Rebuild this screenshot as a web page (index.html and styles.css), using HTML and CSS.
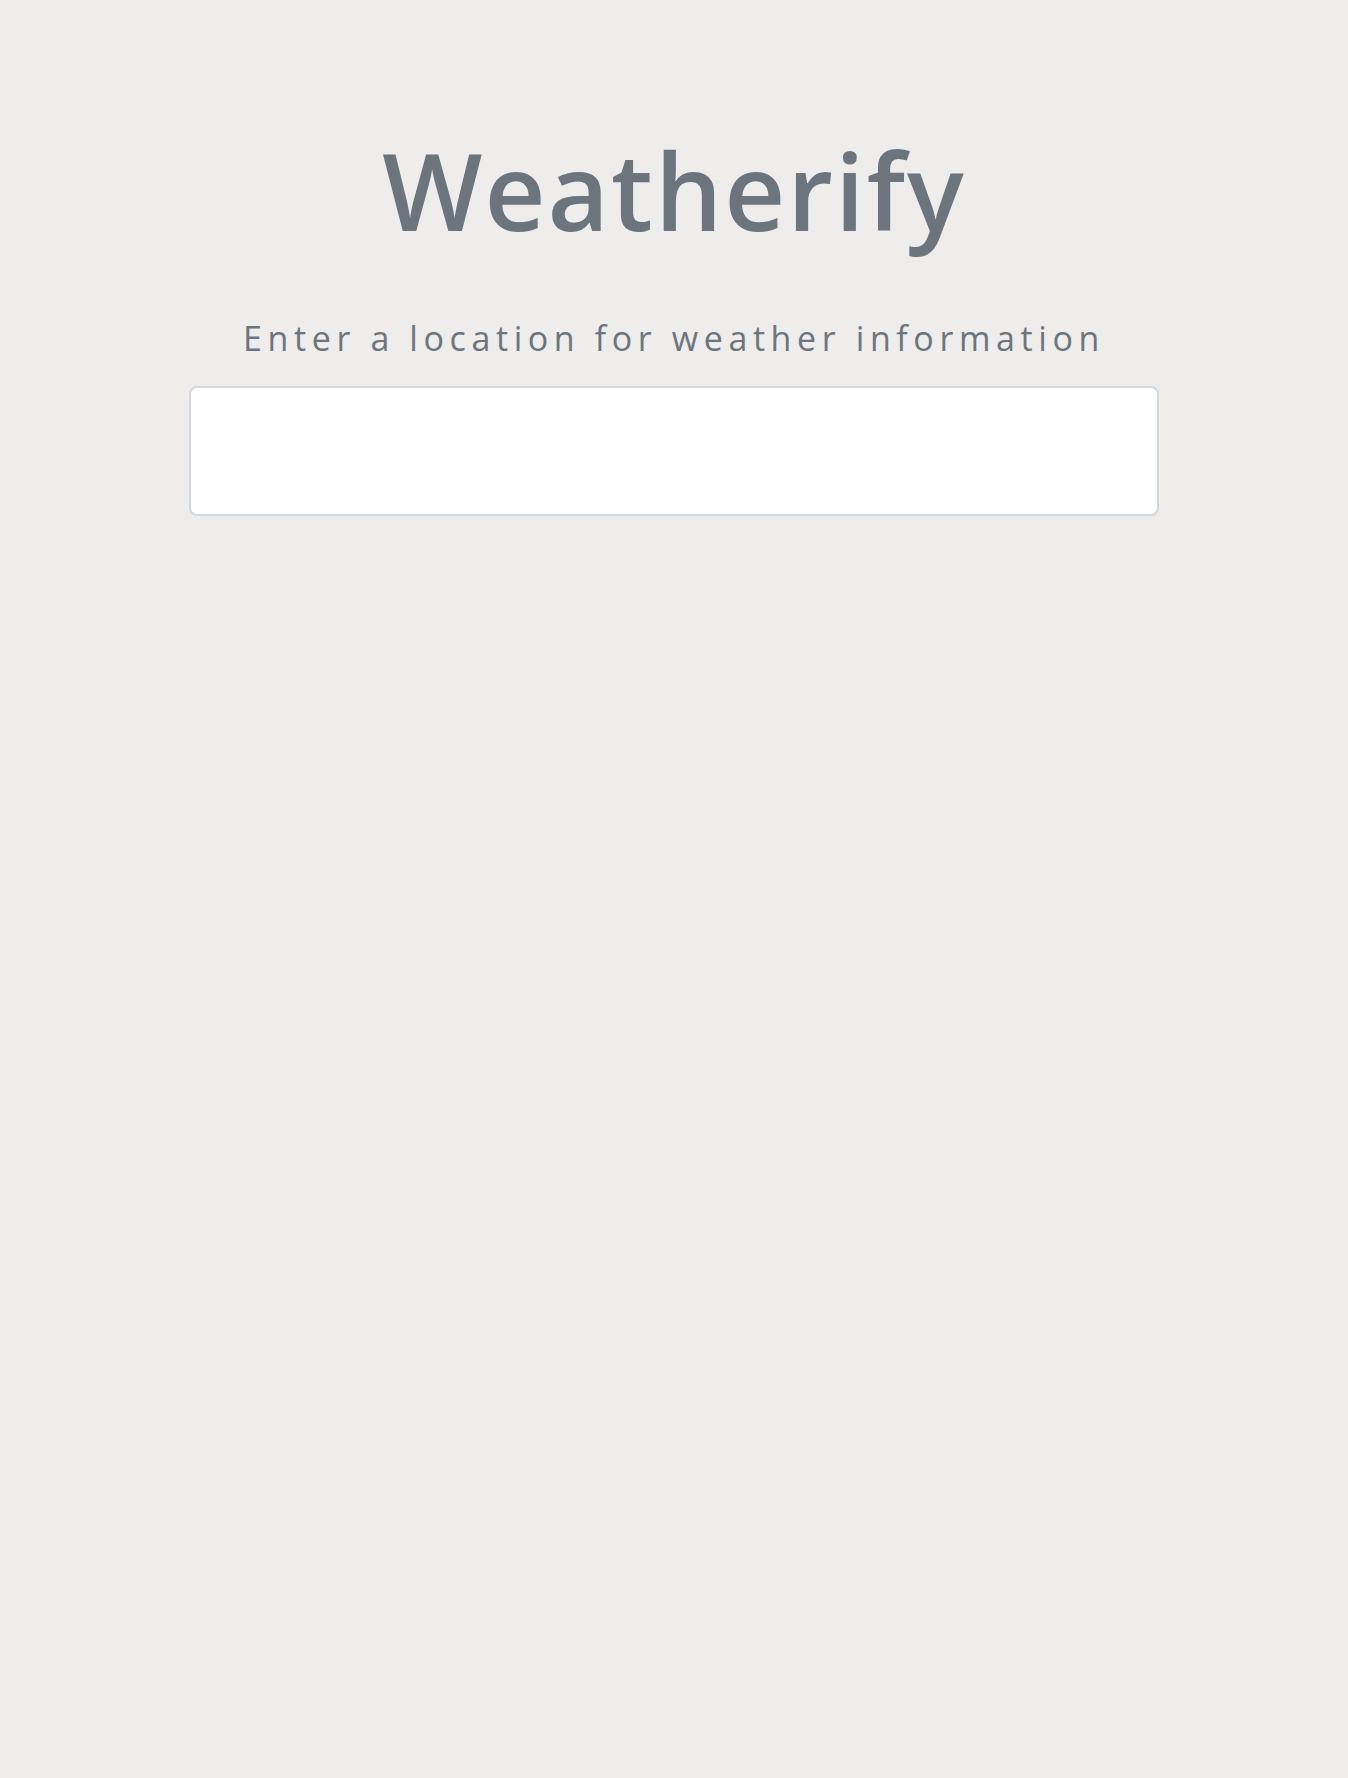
FILE: index.html
```html
<!DOCTYPE html>
<html lang="en">
<head>
<meta charset="utf-8">
<title>Weatherify</title>
<link rel="stylesheet" href="styles.css">
</head>
<body>
<main class="app">
  <h1 class="title">Weatherify</h1>
  <p class="subtitle">Enter a location for weather information</p>
  <input class="search" type="text" aria-label="Location">
</main>
</body>
</html>
```
FILE: styles.css
```css
html, body {
  margin: 0;
  padding: 0;
  background: #eeedeb;
  min-height: 100%;
}
body {
  font-family: "Open Sans", "Noto Sans", sans-serif;
  color: #6c757d;
}
.app {
  display: flex;
  flex-direction: column;
  align-items: center;
  padding-top: 127px;
}
.title {
  margin: 0;
  font-size: 106px;
  font-weight: 600;
  letter-spacing: 2px;
  line-height: 1.2;
}
.subtitle {
  margin: 64px 0 0;
  font-size: 34px;
  font-weight: 400;
  letter-spacing: 5.6px;
  line-height: 1.2;
}
.search {
  box-sizing: border-box;
  width: 970px;
  height: 130px;
  margin-top: 27px;
  background: #fff;
  border: 2px solid #d4d9df;
  border-radius: 8px;
  font-size: 32px;
  padding: 0 20px;
  outline: none;
}
```
